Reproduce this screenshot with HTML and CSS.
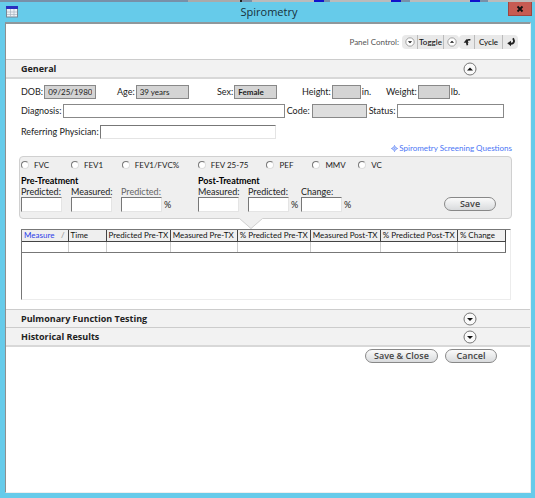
FILE: index.html
```html
<!DOCTYPE html>
<html lang="en">
<head>
<meta charset="utf-8">
<title>Spirometry</title>
<link rel="stylesheet" href="styles.css">
</head>
<body>
<div class="backdrop"></div>
<header class="titlebar">
  <svg class="app-icon" viewBox="0 0 12 12"><rect x="0.5" y="0.5" width="11" height="10.5" fill="#eef2f6" stroke="#7a8794"/><rect x="0" y="0" width="12" height="3" fill="#2a2fc0"/><path d="M4.5 3v8M8 3v8M1 6h10M1 8.500h10" stroke="#a9b5c1" stroke-width="0.700"/></svg>
  <h1>Spirometry</h1>
  <button class="close" aria-label="Close"><svg viewBox="0 0 8 8"><path d="M1.500 1.500l5 5M6.500 1.500l-5 5" stroke="#111" stroke-width="1.800"/></svg></button>
</header>
<main class="window">
  <div class="toolbar">
    <span>Panel Control:</span>
    <div class="tool-group">
      <button aria-label="Expand all"><svg class="mini" viewBox="0 0 12 12"><circle cx="6" cy="6" r="5" fill="#fff" stroke="#888" stroke-width="0.900"/><path d="M3.500 5h5L6 7.500z" fill="#111"/></svg></button>
      <button class="tool-text">Toggle</button>
      <button aria-label="Collapse all"><svg class="mini" viewBox="0 0 12 12"><circle cx="6" cy="6" r="5" fill="#fff" stroke="#888" stroke-width="0.900"/><path d="M3.500 7h5L6 4.500z" fill="#111"/></svg></button>
    </div>
    <div class="tool-group">
      <button aria-label="Previous"><svg class="mini" viewBox="0 0 12 12"><path d="M10 3.500C6 2.500 5 5 6.500 10" fill="none" stroke="#222" stroke-width="2"/><path d="M2 7L5.500 2.500 8 7z" fill="#222"/></svg></button>
      <button class="tool-text cycle">Cycle</button>
      <button aria-label="Next"><svg class="mini" viewBox="0 0 12 12"><path d="M8.500 1.500C11 6 9 8.500 5 8" fill="none" stroke="#222" stroke-width="2.200"/><path d="M1.500 7.500L6 4.500v6.500z" fill="#222"/></svg></button>
    </div>
  </div>

  <section class="bar open">
    <h2>General</h2>
    <button class="chevron" aria-label="Collapse General"><svg viewBox="0 0 14 14"><circle cx="7" cy="7" r="6" fill="#fafafa" stroke="#777"/><path d="M4 8.500h6L7 5.500z" fill="#111"/></svg></button>
  </section>

  <form class="general">
    <div class="vitals">
      <div class="field"><label for="dob">DOB:</label><input id="dob" class="ro dob" value="09/25/1980" readonly></div>
      <div class="field"><label for="age">Age:</label><input id="age" class="ro age" value="39 years" readonly></div>
      <div class="field"><label for="sex">Sex:</label><input id="sex" class="ro sex" value="Female" readonly></div>
      <div class="field"><label for="height">Height:</label><input id="height" class="ro height" readonly><span class="unit">in.</span></div>
      <div class="field"><label for="weight">Weight:</label><input id="weight" class="ro weight" readonly><span class="unit">lb.</span></div>
    </div>
    <div class="diagnosis">
      <label for="diag">Diagnosis:</label><input id="diag">
      <label for="code">Code:</label><input id="code" class="ro light" readonly>
      <label for="status">Status:</label><input id="status">
    </div>
    <div class="physician">
      <label for="phys">Referring Physician:</label><input id="phys" class="sunken">
    </div>
    <a class="screening" href="#"><svg viewBox="0 0 8 8"><path d="M4 .5L5 2.500 4 3.500 3 2.500zM4 7.500l1-2-1-1-1 1zM.5 4l2-1 1 1-1 1zM7.500 4l-2-1-1 1 1 1z" fill="none" stroke="#4b76f5" stroke-width="0.800"/></svg>Spirometry Screening Questions</a>

    <div class="panel">
      <div class="tests">
        <label><input type="radio" name="test">FVC</label>
        <label><input type="radio" name="test">FEV1</label>
        <label><input type="radio" name="test">FEV1/FVC%</label>
        <label><input type="radio" name="test">FEV 25-75</label>
        <label><input type="radio" name="test">PEF</label>
        <label><input type="radio" name="test">MMV</label>
        <label><input type="radio" name="test">VC</label>
      </div>
      <div class="treatments">
        <fieldset>
          <legend>Pre-Treatment</legend>
          <div class="readings">
            <div class="reading"><label for="p1">Predicted:</label><input id="p1" class="sunken"></div>
            <div class="reading"><label for="p2">Measured:</label><input id="p2" class="sunken"></div>
            <div class="reading muted"><label for="p3">Predicted:</label><span><input id="p3" class="sunken">%</span></div>
          </div>
        </fieldset>
        <fieldset>
          <legend>Post-Treatment</legend>
          <div class="readings">
            <div class="reading"><label for="q1">Measured:</label><input id="q1" class="sunken"></div>
            <div class="reading wide"><label for="q2">Predicted:</label><span><input id="q2" class="sunken">%</span></div>
            <div class="reading"><label for="q3">Change:</label><span><input id="q3" class="sunken">%</span></div>
          </div>
        </fieldset>
        <button type="button" class="pill save">Save</button>
      </div>
      <svg class="notch" viewBox="0 0 26 12"><path d="M0 0h26v1h-2L13 11 2 1H0z" fill="#efefef"/><path d="M0 .5h1.500L13 10.500 24.500.5H26" fill="none" stroke="#d0d0d0"/></svg>
    </div>

    <div class="grid-box">
      <table>
        <colgroup><col class="c46"><col class="c38"><col class="c64"><col class="c67"><col class="c73"><col class="c70"><col class="c77"><col class="c48"></colgroup>
        <thead><tr><th class="sorted"><span>Measure</span><i>/</i></th><th>Time</th><th>Predicted Pre-TX</th><th>Measured Pre-TX</th><th>% Predicted Pre-TX</th><th>Measured Post-TX</th><th>% Predicted Post-TX</th><th>% Change</th></tr></thead>
        <tbody><tr><td></td><td></td><td></td><td></td><td></td><td></td><td></td><td></td></tr></tbody>
      </table>
    </div>
  </form>

  <section class="bar">
    <h2>Pulmonary Function Testing</h2>
    <button class="chevron" aria-label="Expand Pulmonary Function Testing"><svg viewBox="0 0 14 14"><circle cx="7" cy="7" r="6" fill="#fafafa" stroke="#777"/><path d="M4 6h6L7 9z" fill="#111"/></svg></button>
  </section>
  <section class="bar last">
    <h2>Historical Results</h2>
    <button class="chevron" aria-label="Expand Historical Results"><svg viewBox="0 0 14 14"><circle cx="7" cy="7" r="6" fill="#fafafa" stroke="#777"/><path d="M4 6h6L7 9z" fill="#111"/></svg></button>
  </section>
  <footer class="actions">
    <button class="pill long">Save &amp; Close</button>
    <button class="pill">Cancel</button>
  </footer>
</main>
</body>
</html>
```
FILE: styles.css
```css
* { box-sizing: border-box; }
body {
  margin: 0;
  min-height: 100vh;
  display: flex;
  flex-direction: column;
  background: #66cbea;
  color: #222;
  font: 9px/10px Lato, "Open Sans", sans-serif;
}
button, input { font: inherit; color: inherit; margin: 0; }
button { padding: 0; border: 0; background: none; }
svg { display: block; }
h1, h2 { margin: 0; }

.backdrop {
  height: 2px;
  background: linear-gradient(90deg, #7890a8 0 188px, #aaa 188px 240px, #222 240px 242px, #7890a8 242px 252px, #bbb 252px 314px, #11c 314px 324px, #7890a8 324px 330px, #bbb 330px 391px, #11c 391px 401px, #7890a8 401px 410px, #bbb 410px 470px, #11c 470px 480px, #7890a8 480px 488px, #bbb 488px);
}
.titlebar {
  height: 20px;
  display: grid;
  grid-template-columns: 1fr auto 1fr;
  align-items: center;
  padding: 0 3px 0 6px;
}
.app-icon { width: 12px; height: 12px; }
.titlebar h1 { font: 400 11px/18px "Open Sans", sans-serif; color: #17303a; }
.close {
  justify-self: end;
  align-self: start;
  width: 24px;
  height: 14px;
  background: #c75b52;
  border: 1px solid #a1443f;
  border-top: 0;
  display: grid;
  place-items: center;
}
.close svg { width: 8px; height: 8px; }

.window {
  flex: 1;
  margin: 0 4px 5px 5px;
  background: #fff;
  border: 1px solid #eee;
  border-top: 2px solid #8f979b;
  border-left-color: #8f8f8f;
}
.toolbar {
  height: 35px;
  display: flex;
  justify-content: flex-end;
  align-items: center;
  padding-right: 12px;
  font-size: 8px;
  color: #555;
}
.toolbar > span { margin-right: 3px; }
.tool-group { display: flex; height: 14px; background: #e9e9e9; border-radius: 4px; }
.tool-group button { width: 15px; display: grid; place-items: center; }
.tool-group .tool-text {
  width: 27px;
  font-weight: 500;
  color: #111;
  border: 1px solid #bbb;
  border-width: 0 1px;
}
.tool-group .cycle { width: 29px; }
.mini { width: 10px; height: 10px; }

.bar {
  height: 18px;
  display: flex;
  justify-content: space-between;
  align-items: center;
  padding: 0 53px 0 15px;
  background: #f2f2f2;
  border-top: 1px solid #ccc;
}
.bar.open, .bar.last { height: 20px; border-bottom: 2px solid #d8d8d8; }
.bar h2 { font: 700 9px/12px "Open Sans", sans-serif; }
.chevron { width: 14px; height: 14px; }

.general { padding: 6px 18px 9px 15px; }
.general input:not([type]) {
  height: 14px;
  padding: 0 3px;
  border: 1px solid #888;
  background: #fff;
  min-width: 0;
  border-radius: 0;
}
.general .ro:not([type]) { padding: 0 3px; font-size: 8px; background: #d4d4d4; }
.general .light:not([type]) { background: #dedede; }
.general .sunken:not([type]) { border-color: #777 #e4e4e4 #e4e4e4 #777; }

.vitals { display: grid; grid-template-columns: 96fr 100fr 85fr 84fr 126fr; }
.field { display: flex; align-items: center; }
.field label { flex: none; margin-right: 1px; }
.dob { width: 52px; text-align: center; }
.age { width: 53px; }
.sex { width: 43px; font-weight: 700; }
.height { width: 29px; }
.weight { width: 32px; }
.unit { margin-left: 1px; }

.diagnosis { display: flex; align-items: center; gap: 2px; margin: 5px 8px 0 0; }
.diagnosis label { flex: none; }
#diag { flex: 227; width: 0; }
#code { flex: 50; width: 0; }
#status { flex: 105; width: 0; }
.physician { display: flex; align-items: center; gap: 1px; margin-top: 7px; width: 52%; }
.physician label { flex: none; }
.physician input { flex: 1; }
.screening {
  display: flex;
  justify-content: flex-end;
  align-items: center;
  gap: 1px;
  margin: 4px 0 3px;
  font-size: 8px;
  color: #4b76f5;
  text-decoration: none;
}
.screening svg { width: 7px; height: 7px; }

.panel {
  position: relative;
  height: 63px;
  margin: 0 0 0 -2px;
  padding: 3px 15px 0 1px;
  background: #efefef;
  border: 1px solid #d0d0d0;
  border-radius: 4px;
}
.tests { display: grid; grid-template-columns: 50fr 51fr 76fr 69fr 46fr 46fr 138fr; font-size: 8px; }
.tests label { display: flex; align-items: center; gap: 5px; }
.tests input {
  appearance: none;
  width: 8px;
  height: 8px;
  border: 1px solid #777;
  border-color: #777 #ddd #ddd #777;
  border-radius: 50%;
  background: #fff;
}
.treatments {
  display: grid;
  grid-template-columns: 177fr 246fr auto;
  margin-top: 6px;
  color: #222;
}
fieldset { border: 0; margin: 0; padding: 0; min-width: 0; }
legend { padding: 0; font: 700 9px/10px Lato, "Open Sans", sans-serif; color: #000; }
.readings { display: flex; gap: 9px; margin-top: 1px; }
.reading { width: 41px; white-space: nowrap; display: flex; flex-direction: column; }
.reading.wide { width: 44px; }
.reading span { display: flex; align-items: center; gap: 2px; }
.general .reading input:not([type]) { width: 41px; height: 15px; flex: none; }
.muted label { color: #666; }
.pill {
  width: 52px;
  height: 14px;
  border: 1px solid #888;
  border-radius: 7px;
  background: linear-gradient(#fafafa, #d9dbdd);
  font: 600 9px/12px "Open Sans", sans-serif;
  color: #444;
}
.pill.long { width: 73px; }
.save { align-self: end; margin-bottom: 1px; }
.notch { position: absolute; left: calc(50% - 28px); top: 61px; width: 26px; height: 12px; }

.grid-box {
  height: 71px;
  margin: 10px 1px 0 0;
  border: 1px solid #777;
  border-right-color: #ececec;
  border-bottom-color: #ececec;
  padding-right: 4px;
}
table { width: 100%; table-layout: fixed; border-collapse: collapse; font-size: 8px; }
th, td { height: 11px; padding: 0 0 0 2px; }
th {
  font-weight: 400;
  text-align: left;
  line-height: 10px;
  white-space: nowrap;
  color: #111;
  background: #efefef;
  border-right: 1px solid #444;
  border-bottom: 1px solid #444;
}
td { border-right: 1px solid #ccc; border-bottom: 1px solid #777; }
td:last-child { border-right-color: #666; }
.sorted { color: #2a3be8; }
.sorted i { float: right; margin-right: 3px; color: #888; font-style: normal; }
.c46 { width: 46px; }
.c38 { width: 38px; }
.c64 { width: 64px; }
.c67 { width: 67px; }
.c73 { width: 73px; }
.c70 { width: 70px; }
.c77 { width: 77px; }
.c48 { width: 48px; }

.actions { display: flex; justify-content: flex-end; gap: 7px; padding: 2px 33px 0 0; }
```
